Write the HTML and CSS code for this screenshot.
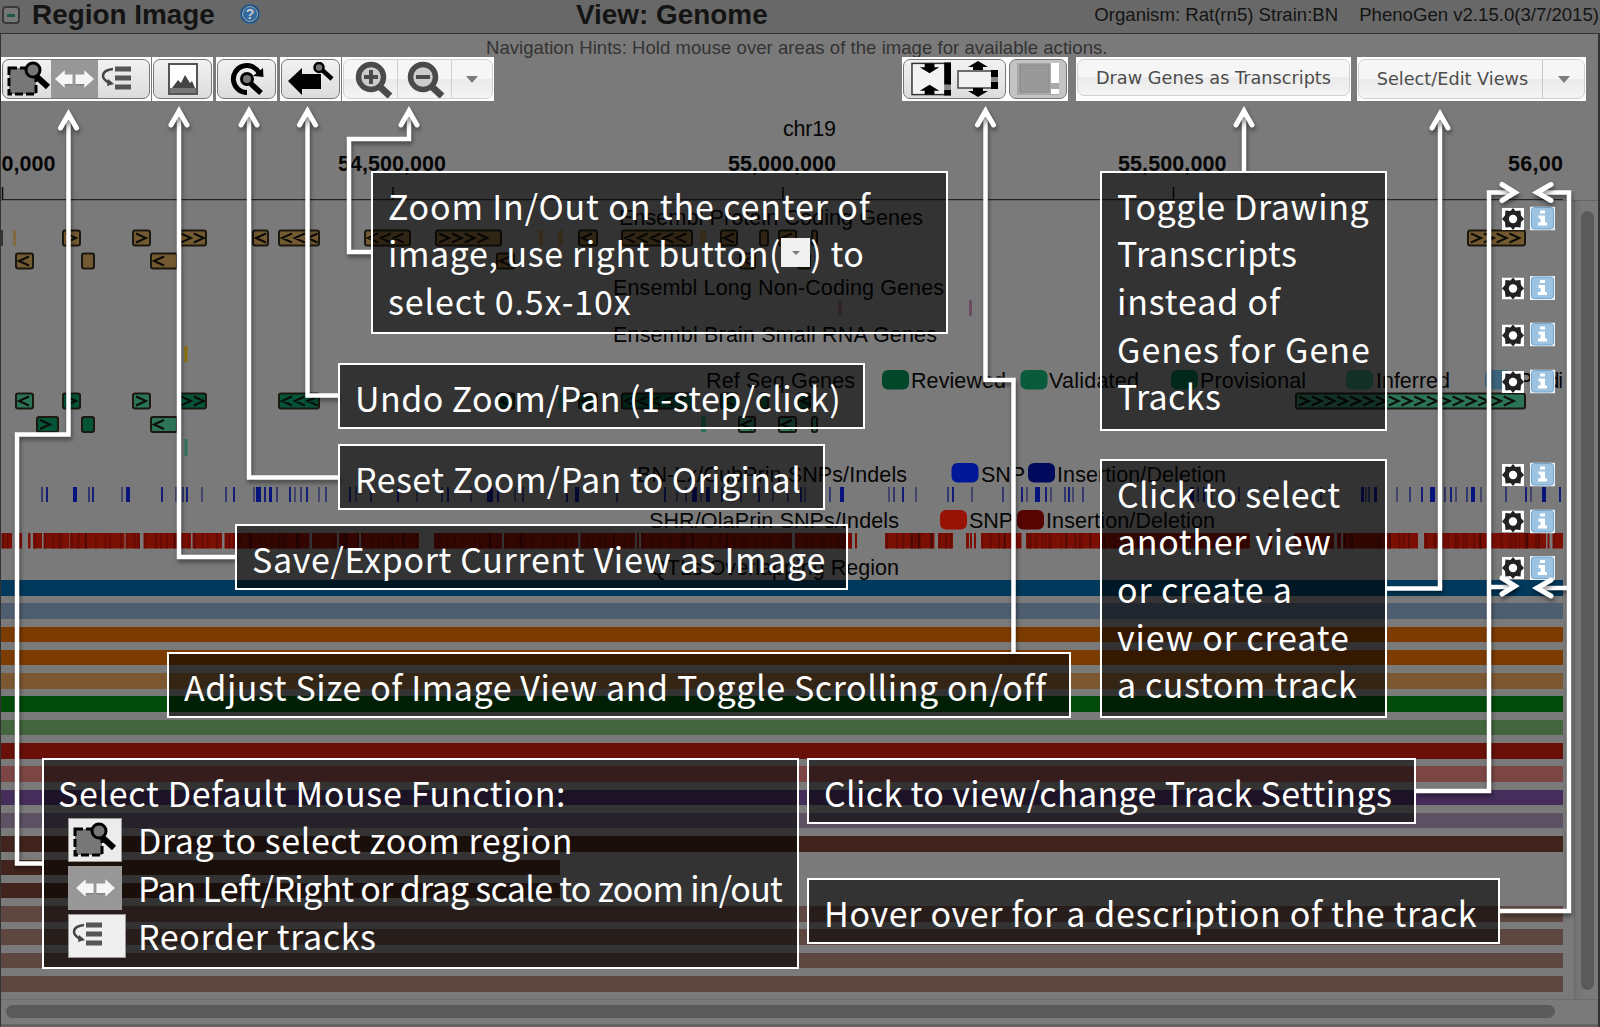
FILE: index.html
```html
<!DOCTYPE html>
<html lang="en">
<head>
<meta charset="utf-8">
<title>PhenoGen Region Image</title>
<link rel="stylesheet" href="styles.css">
</head>
<body>
<svg class="defs" aria-hidden="true">
  <symbol id="i-select" viewBox="0 0 44 36">
    <path d="M2 7H29V33H2Z" fill="#777" stroke="#000" stroke-width="3" stroke-dasharray="8 3"/>
    <path d="M29 15L41 26" stroke="#000" stroke-width="6"/>
    <circle cx="26" cy="9" r="7" fill="#777" stroke="#000" stroke-width="3"/>
  </symbol>
  <symbol id="i-pan" viewBox="0 0 42 20">
    <path d="M1 10L11 1V5.500H19V15H11V19ZM41 10L31 1V5.500H22V15H31V19Z" fill="#f6f6f6"/>
    <path d="M11 16H19M22 16H31" stroke="#777" stroke-width="1"/>
  </symbol>
  <symbol id="i-order" viewBox="0 0 32 24">
    <path d="M14 3H30M14 12H30M14 21H30" stroke="#555" stroke-width="5"/>
    <path d="M12 3Q2 4 2 10Q2 14 9 17" fill="none" stroke="#444" stroke-width="2.500"/>
    <path d="M7 13L13 18L6 20Z" fill="#444"/>
  </symbol>
  <symbol id="i-gear" viewBox="0 0 22 22">
    <rect width="22" height="22" fill="#fff"/>
    <path d="M11 0L13.500 3L18.500 2.500L19 7.500L22 11L19 14L18.500 19.500L13.500 19L11 22L8.500 19L3.500 19.500L3 14L0 11L3 7.500L3.500 2.500L8.500 3Z" fill="#222"/>
    <circle cx="11" cy="11" r="4.200" fill="#fff"/>
  </symbol>
  <symbol id="i-info" viewBox="0 0 25 24">
    <rect width="25" height="24" fill="#e8f1f8"/>
    <rect x="1.500" y="1" width="22" height="21.500" rx="3" fill="#9dc3e2" stroke="#76a5cc"/>
    <path d="M10 4h5v3h-5zM8.500 9H15V16h2v3H8v-3h2.500v-4h-2z" fill="#fff"/>
  </symbol>
</svg>

<div class="page">
  <header class="head">
    <span class="collapse"></span>
    <h1 class="title">Region Image</h1>
    <svg class="help" viewBox="0 0 22 22"><circle cx="11" cy="11" r="10" fill="#1f4f80" stroke="#4a6a88"/><circle cx="11" cy="11" r="7.500" fill="#356a9c" stroke="#9ab" stroke-width="1"/><text x="11" y="16" text-anchor="middle" class="help-q">?</text></svg>
    <h2 class="title view">View: Genome</h2>
    <span class="meta organism">Organism: Rat(rn5) Strain:BN</span>
    <span class="meta">PhenoGen v2.15.0(3/7/2015)</span>
  </header>
  <main class="panel">
    <p class="hint">Navigation Hints: Hold mouse over areas of the image for available actions.</p>
    <div class="tools">
      <div class="well w-mouse"><div class="group">
        <svg class="ic-select"><use href="#i-select"/></svg>
        <span class="on"><svg class="ic-pan"><use href="#i-pan"/></svg></span>
        <svg class="ic-order"><use href="#i-order"/></svg>
      </div></div>
      <div class="well w-save"><div class="group mid">
        <svg width="30" height="32" viewBox="0 0 30 32"><rect x="1" y="1" width="28" height="30" fill="#fff" stroke="#555" stroke-width="2"/><rect x="2" y="25" width="26" height="5" fill="#777"/><path d="M4 25L10 17L13 20L17 12L22 20L24 18L27 25Z" fill="#444"/></svg>
      </div></div>
      <div class="well w-reset"><div class="group mid">
        <svg width="34" height="34" viewBox="0 0 34 34"><path d="M17 30.500A13.500 13.500 0 1 1 29 11" fill="none" stroke="#000" stroke-width="5"/><path d="M23 14L33.500 15L33 6Z"/><path d="M18 19L31 31" stroke="#000" stroke-width="5.500"/><circle cx="17" cy="17" r="5.500" fill="#777" stroke="#000" stroke-width="3"/></svg>
      </div></div>
      <div class="well w-undo"><div class="group mid">
        <svg width="46" height="34" viewBox="0 0 46 34"><path d="M0 19L14 6V12H33V27H14V33Z"/><path d="M32 6L44 17" stroke="#000" stroke-width="4.500"/><circle cx="31" cy="5.500" r="4.500" fill="#777" stroke="#000" stroke-width="2.500"/></svg>
      </div></div>
      <div class="well w-zoom"><div class="group soft">
        <span class="cell c1"><svg width="40" height="40" viewBox="0 0 40 40"><path d="M26 27L37 37" stroke="#4a4a4a" stroke-width="7"/><circle cx="18" cy="18" r="12.500" fill="#ccc" stroke="#4a4a4a" stroke-width="5.500"/><path d="M11 18H25M18 11V25" stroke="#4a4a4a" stroke-width="4"/></svg></span>
        <span class="cell c2"><svg width="40" height="40" viewBox="0 0 40 40"><path d="M26 27L37 37" stroke="#4a4a4a" stroke-width="7"/><circle cx="18" cy="18" r="12.500" fill="#ccc" stroke="#4a4a4a" stroke-width="5.500"/><path d="M11 18H25" stroke="#4a4a4a" stroke-width="4"/></svg></span>
        <span class="cell"><i class="caret"></i></span>
      </div></div>
      <div class="well w-size"><div class="group size">
        <svg width="40" height="34" viewBox="0 0 41 34"><rect x="1" y="1" width="39" height="32" fill="#f2f2f2" stroke="#333" stroke-width="1.500"/><path d="M34 0h7v23h-7zM34 28h7v6h-7z"/><path d="M34 23h7v5h-7z" fill="#888"/><path d="M14 1H24V5H29L19 11L9 5H14ZM14 33H24V29H29L19 23L9 29H14Z"/></svg>
        <svg width="41" height="38" viewBox="0 0 41 38"><rect x="1" y="11" width="39" height="17" fill="#f2f2f2" stroke="#444" stroke-width="1.500"/><path d="M34 10h7v7h-7zM34 22h7v7h-7z"/><path d="M34 17h7v5h-7z" fill="#888"/><path d="M16 10H26V7H31L21 1L11 7H16ZM16 28H26V31H31L21 37L11 31H16Z"/></svg>
      </div><div class="group scroll">
        <svg width="42" height="32" viewBox="0 0 42 32"><rect width="42" height="32" fill="#a8a8a8"/><rect x="3" y="2" width="29" height="27" fill="#999" stroke="#888"/><path d="M34 0h8v20h-8zM34 26h8v5h-8z" fill="#fff"/></svg>
      </div></div>
      <div class="well w-draw"><div class="group soft mid"><span class="btn">Draw Genes as Transcripts</span></div></div>
      <div class="well w-views"><div class="group soft"><span class="cell btn c3">Select/Edit Views</span><span class="cell"><i class="caret"></i></span></div></div>
    </div>
    <svg class="axis" id="axis" width="1563" height="100" viewBox="1 101 1563 100">
      <path d="M2.500 187V200H1563M393 187V200M783 187V200M1173.500 187V200" fill="none" stroke="#0a0a0a" stroke-width="1.500"/>
      <g class="lbl"><text x="783" y="136" textLength="53">chr19</text>
      <g class="pos"><text x="1.500" y="171" textLength="54">0,000</text><text x="338" y="171" textLength="108">54,500,000</text><text x="728" y="171" textLength="108">55,000,000</text><text x="1118" y="171" textLength="108.500">55,500,000</text><text x="1508" y="171" textLength="55">56,00</text></g></g>
    </svg>
    <div class="view-row">
      <div class="tracks">
        <svg id="tracks" width="1574" height="379" viewBox="1 201 1574 379">
          <g id="marks"></g>
          <g class="lbl">
            <text x="619" y="225" textLength="304">Ensembl Protein Coding Genes</text>
            <text x="613" y="295" textLength="331">Ensembl Long Non-Coding Genes</text>
            <text x="613" y="342" textLength="324">Ensembl Brain Small RNA Genes</text>
            <text x="706" y="388" textLength="149">Ref Seq Genes</text>
            <text x="911" y="388" textLength="95">Reviewed</text>
            <text x="1049" y="388" textLength="90">Validated</text>
            <text x="1200" y="388" textLength="106">Provisional</text>
            <text x="1376" y="388" textLength="74">Inferred</text>
            <text x="1518" y="388" textLength="45">Predi</text>
            <text x="637" y="481.500" textLength="270">BN-Lx/CubPrin SNPs/Indels</text>
            <text x="981" y="481.500" textLength="44">SNP</text>
            <text x="1057" y="481.500" textLength="169">Insertion/Deletion</text>
            <text x="649" y="528" textLength="250">SHR/OlaPrin SNPs/Indels</text>
            <text x="969" y="528" textLength="44">SNP</text>
            <text x="1046" y="528" textLength="169">Insertion/Deletion</text>
            <text x="650" y="574.500" textLength="249">QTLs Overlapping Region</text>
          </g>
        </svg>
        <div class="qtls">
          <i class="q navy"></i><i class="q steel"></i><i class="q orange"></i><i class="q orange"></i><i class="q tan"></i><i class="q green"></i><i class="q sage"></i><i class="q red"></i><i class="q rose"></i><i class="q violet"></i><i class="q mauve"></i><i class="q brown"></i><i class="q brown short"></i><i class="q brown short"></i><i class="q clay"></i><i class="q clay"></i><i class="q clay"></i><i class="q clay"></i>
        </div>
      </div>
      <div class="vbar"><i></i></div>
    </div>
    <div class="hbar"><i></i></div>
  </main>

  <svg class="links" width="1600" height="1027" viewBox="0 0 1600 1027">
    <g id="badges"></g>
    <g class="wire">
      <path d="M68.500 114V434.500H17V863.500H42"/>
      <path d="M179 111V557H236"/>
      <path d="M249 111V477.500H339"/>
      <path d="M307.500 111V395.500H339"/>
      <path d="M409 111V139H349V252H372"/>
      <path d="M985.500 111V380H1013.500V652"/>
      <path d="M1244 111V171"/>
      <path d="M1440 114V588.500H1387"/>
      <path d="M1416 791H1489V192.500H1514M1489 587H1514"/>
      <path d="M1500 911H1569V192.500H1539M1569 588H1539"/>
    </g>
    <g class="tips">
      <path d="M60.500 128L68.500 114L76.500 128M171 125L179 111L187 125M241 125L249 111L257 125M299.500 125L307.500 111L315.500 125M401 125L409 111L417 125M977.500 125L985.500 111L993.500 125M1236 125L1244 111L1252 125M1432 128L1440 114L1448 128"/>
      <path d="M1502 184.500L1515 192.500L1502 200.500M1502 578L1515 586L1502 594M1551 184.500L1537 192.500L1551 200.500M1551 580L1537 588L1551 596"/>
    </g>
  </svg>

  <div class="note n-zoom">
    <p class="s4">Zoom In/Out on the center of</p>
    <p>image, use right button(<b class="mini"><i class="caret"></i></b>) to</p>
    <p class="s4">select 0.5x-10x</p>
  </div>
  <div class="note n-undo"><p class="s2">Undo Zoom/Pan (1-step/click)</p></div>
  <div class="note n-reset"><p class="s2">Reset Zoom/Pan to Original</p></div>
  <div class="note n-save"><p class="s3">Save/Export Current View as Image</p></div>
  <div class="note n-adjust"><p>Adjust Size of Image View and Toggle Scrolling on/off</p></div>
  <div class="note n-mouse">
    <p class="s3">Select Default Mouse Function:</p>
    <p><b class="chip"><svg class="ic-select"><use href="#i-select"/></svg></b>Drag to select zoom region</p>
    <p class="tight"><b class="chip dark"><svg class="ic-pan"><use href="#i-pan"/></svg></b>Pan Left/Right or drag scale to zoom in/out</p>
    <p><b class="chip wide"><svg class="ic-order"><use href="#i-order"/></svg></b>Reorder tracks</p>
  </div>
  <div class="note n-settings"><p class="s1">Click to view/change Track Settings</p></div>
  <div class="note n-hover"><p class="s3">Hover over for a description of the track</p></div>
  <div class="note n-toggle">
    <p>Toggle Drawing</p><p class="s2">Transcripts</p><p class="s4">instead of</p><p class="s5">Genes for Gene</p><p class="s1">Tracks</p>
  </div>
  <div class="note n-views">
    <p class="s1">Click to select</p><p class="s3">another view</p><p class="s4">or create a</p><p class="s4">view or create</p><p>a custom track</p>
  </div>
</div>
<script src="tracks.js"></script>
</body>
</html>
```

FILE: styles.css
```css
* { box-sizing: border-box; }
body { margin: 0; background: #7b7a7a; font-family: "Liberation Sans", Arial, sans-serif; }
p, h1, h2 { margin: 0; }
.defs { position: absolute; width: 0; height: 0; }
.page { position: relative; width: 1600px; height: 1027px; overflow: hidden; }

/* header */
.head { display: flex; align-items: center; height: 33px; padding: 0 1px 3px 2px; background: #686868; color: #141414; white-space: nowrap; }
.collapse { position: relative; width: 18px; height: 18px; margin-right: 12px; border: 2px solid #3a3a3a; border-radius: 4px; background: #777; }
.collapse::after { content: ""; position: absolute; left: 3px; top: 6px; width: 8px; height: 3px; background: #1f5a48; }
.title { font-size: 27.9px; line-height: 30px; width: 182px; }
.help { width: 22px; height: 22px; margin: -2px 0 0 25px; }
.help-q { font: bold 14px "Liberation Sans", sans-serif; fill: #c4ccd4; }
.view { width: 192px; margin-left: 315px; }
.meta { font-size: 18.600px; }
.organism { margin: 0 21px 0 auto; }

/* panel and toolbar */
.panel { display: flex; flex-direction: column; height: 994px; border: 1px solid #333; border-width: 1px 2px 0 1px; background: #7b7a7a; }
.hint { height: 23px; padding-left: 485px; font-size: 18.500px; line-height: 27px; letter-spacing: .06px; color: #333; white-space: nowrap; }
.tools { display: flex; height: 44px; }
.well { display: flex; gap: 3px; padding: 2px 1px; background: #fff; }
.group { display: flex; align-items: center; flex: 1; border: 1.500px solid #777; border-radius: 7px; background: linear-gradient(#f2f2f2, #dcdcdc); overflow: hidden; }
.mid { justify-content: center; }
.soft { border-color: #d0d0d0; background: linear-gradient(#f6f6f6 50%, #ebebeb 50%, #f4f4f4); }
.w-mouse { width: 150px; }
.w-save { width: 61px; margin-left: 1px; }
.w-reset { width: 61px; margin-left: 3px; }
.w-undo { width: 61px; margin-left: 3px; }
.w-zoom { width: 152px; margin-left: 1px; }
.w-size { width: 166px; margin-left: 408px; }
.w-draw { width: 275px; margin-left: 8px; }
.w-draw .group { margin-bottom: 3px; }
.w-views { width: 229px; margin-left: 6px; }
.ic-select { width: 44px; height: 36px; margin-left: 4px; flex: none; }
.on { display: flex; align-items: center; justify-content: center; width: 47px; height: 42px; background: #979797; flex: none; }
.ic-pan { width: 41px; height: 20px; flex: none; }
.ic-order { width: 32px; height: 24px; margin-left: 3px; margin-top: -3px; flex: none; }
.cell { display: flex; align-items: center; justify-content: center; height: 100%; flex: 1; }
.c1, .c2 { flex: 0 0 54px; border-right: 1px solid #d0d0d0; }
.c1 { padding-left: 4px; }
.c3 { flex: 0 0 184px; padding-left: 4px; border-right: 1px solid #c8c8c8; }
.caret { width: 0; height: 0; border: 6px solid transparent; border-top: 7px solid #7c7c7c; border-bottom: 0; }
.btn { font: 17.700px "DejaVu Sans", sans-serif; color: #4c4c4c; white-space: nowrap; }
.size { flex: 0 0 103px; justify-content: space-evenly; }
.scroll { background: #c4c4c4; justify-content: center; }

/* genome image */
.axis { display: block; flex: none; }
.lbl { font: 21.500px "Liberation Sans", sans-serif; fill: #060606; }
.pos { font-weight: bold; }
.view-row { display: flex; height: 799px; border-top: 1px solid #666; margin-top: -1px; flex: none; }
.tracks { width: 1574px; border-right: 1px solid #6a6a6a; }
.tracks svg { display: block; }
.qtls { display: flex; flex-direction: column; gap: 7.800px; width: 1562px; }
.q { height: 15.500px; flex: none; }
.short { width: 559px; }
.navy { background: #00395b; }
.steel { background: #4e5d70; }
.orange { background: #7c3b00; }
.tan { background: #7c5832; }
.green { background: #024a0a; }
.sage { background: #44663f; }
.red { background: #691009; }
.rose { background: #7c4644; }
.violet { background: #452e5b; }
.mauve { background: #5d5264; }
.brown { background: #41241d; }
.clay { background: #5d4740; }
.vbar { flex: 1; padding: 10px 0 0 6px; background: linear-gradient(90deg, #727272, #7a7a7a 40%, #7a7a7a); }
.vbar i { display: block; width: 13px; height: 779px; border-radius: 7px; background: #5a5a5a; }
.hbar { flex: 1; padding: 5px 0 0 5px; border-top: 1px solid #6c6c6c; border-bottom: 3px solid #646464; }
.hbar i { display: block; width: 1549px; height: 13px; border-radius: 7px; background: #5a5a5a; }

/* connectors */
.links { position: absolute; left: 0; top: 0; }
.wire, .tips { fill: none; stroke: #fff; stroke-width: 4.500; filter: drop-shadow(1px 3px 2px rgba(0, 0, 0, .45)); }
.tips { stroke-width: 5; stroke-linecap: round; }

/* callouts */
.note { position: absolute; padding: 8.500px 0 0 15px; border: 2px solid #fff; background: rgba(0, 0, 0, .58); color: #fff; font: 34px/47.700px "Noto Sans CJK SC", sans-serif; letter-spacing: .58px; white-space: nowrap; }
.note p { display: flex; }
.note .s1 { letter-spacing: .36px; }
.note .s2 { letter-spacing: .46px; }
.note .s3 { letter-spacing: .67px; }
.note .s4 { letter-spacing: .86px; }
.note .s5 { letter-spacing: 1.050px; }
.note .tight { letter-spacing: -.71px; }
.n-zoom { left: 371px; top: 171px; width: 577px; height: 163px; }
.n-undo { left: 338px; top: 363px; width: 527px; height: 66px; }
.n-reset { left: 338px; top: 444px; width: 487px; height: 66px; }
.n-save { left: 235px; top: 524px; width: 613px; height: 66px; }
.n-adjust { left: 167px; top: 652px; width: 904px; height: 66px; }
.n-mouse { left: 42px; top: 758px; width: 757px; height: 211px; padding-left: 14px; }
.n-settings { left: 807px; top: 758px; width: 609px; height: 66px; }
.n-hover { left: 807px; top: 878px; width: 693px; height: 66px; }
.n-toggle { left: 1100px; top: 171px; width: 287px; height: 260px; }
.n-views { left: 1100px; top: 459px; width: 287px; height: 259px; }
.mini { display: flex; align-items: center; justify-content: center; width: 29px; height: 29px; margin-top: 9px; background: #f0f0f0; }
.mini .caret { border-width: 4px 4px 0; }
.chip { display: flex; align-items: center; width: 54px; height: 44px; margin: 2px 16px 0 10px; background: #ececec; border: 1px solid #999; flex: none; }
.dark { background: #979797; justify-content: center; }
.wide { width: 58px; margin-right: 12px; background: #efefef; }
```

FILE: tracks.js
```js
// Draws genes, variants, legend swatches and per-track buttons.
const NS = 'http://www.w3.org/2000/svg';
const marks = document.getElementById('marks');
const badges = document.getElementById('badges');

function add(parent, tag, attrs) {
  const el = document.createElementNS(NS, tag);
  for (const k in attrs) el.setAttribute(k, attrs[k]);
  parent.appendChild(el);
}
function rect(x, y, w, h, fill, extra) {
  add(marks, 'rect', Object.assign({ x, y, width: w, height: h, fill }, extra));
}
// count > 0 points right, count < 0 points left
function gene(x1, x2, y, fill, count) {
  rect(x1 + 1, y + 1, x2 - x1 - 2, 15, fill, { rx: 2, stroke: '#1c1810', 'stroke-width': 2 });
  let d = '';
  for (let i = 0; i < Math.abs(count); i++) {
    const x = x1 + 4 + i * 12.8;
    d += count > 0 ? `M${x} ${y + 4}L${x + 10} ${y + 8.5}L${x} ${y + 13}`
      : `M${x + 10} ${y + 4}L${x} ${y + 8.5}L${x + 10} ${y + 13}`;
  }
  if (d) add(marks, 'path', { d, fill: 'none', stroke: '#0c0c08', 'stroke-width': 2 });
}
const TAN = '#745a30', DARK = '#04543a', LIGHT = '#2c7458';

[[62, 81, 1], [132, 151, 1], [177, 207, 2], [252, 269, -1], [278, 320, -3], [364, 411, -3],
 [435, 502, 4], [578, 598, -1], [621, 693, -5], [720, 738, -1], [759, 769, 0], [778, 797, -1],
 [811, 818, 0], [1467, 1526, 4]].forEach(g => gene(g[0], g[1], 229.5, TAN, g[2]));
[[15, 34, -1], [81, 95, 0], [150, 178, -1], [496, 515, -1], [739, 756, -1], [797, 811, 0]]
  .forEach(g => gene(g[0], g[1], 252.5, TAN, g[2]));
[[13, 3], [539, 4], [558, 5], [700, 6]].forEach(t => rect(t[0], 230, t[1], 16, '#806840'));
rect(1, 230, 2, 16, '#333');

[[15, 34, -1, LIGHT], [62, 81, 1, DARK], [132, 151, 1, LIGHT], [177, 207, 2, DARK],
 [278, 320, -3, DARK], [496, 515, -1, DARK], [578, 598, -1, DARK], [621, 693, -5, DARK],
 [720, 738, -1, DARK], [759, 769, 0, DARK], [797, 811, -1, DARK], [1295, 1526, 17, LIGHT]]
  .forEach(g => gene(g[0], g[1], 392.5, g[3], g[2]));
[[36, 59, 1, DARK], [81, 95, 0, DARK], [150, 178, -1, LIGHT], [738, 756, -1, LIGHT],
 [778, 797, -1, LIGHT], [811, 818, 0, LIGHT]].forEach(g => gene(g[0], g[1], 416, g[3], g[2]));
rect(558, 393, 5, 16, LIGHT);
rect(701, 416, 5, 16, LIGHT);
rect(184.500, 439, 3, 17, LIGHT);
rect(184.500, 346, 3, 16, '#8a7000');
[838.5, 969, 1124.5].forEach(x => rect(x, 300, 3, 16, '#6c4c62'));

[[882, 370, '#03472a'], [1020.500, 370, '#0a5a3c'], [1171, 370, '#076040'], [1346, 370, '#2c7458'],
 [1485, 370, '#3d667c'], [951.500, 463, '#001898'], [1028, 463, '#000a5c'],
 [940, 510, '#981205'], [1017, 510, '#560402']].forEach(s => rect(s[0], s[1], 27, 19.500, s[2], { rx: 6 }));

// single nucleotide variants: [x, width]
const w1 = x => [x, 2];
const blue = [41, 46, [73, 4], 88, 92, 121, [126, 4], 161, 175, 182, 186, 201, 225, 233, 253, [256, 5], 264,
  [269, 3], 276, 289, 294, 300, 306, 318, 325, 349, 355, 370, 397, 416, 441, 447, 470, [487, 6], 497, 514, 522,
  566, [575, 4], 616, 664, 676, 685, [692, 5], 700, [706, 4], 721, 732, 740, 758, 772, 787, 800, 804, 829,
  [840, 4], 888, 893, 902, 915, 947, 952, 971, 1002, 1021, 1026, [1035, 5], 1045, 1050, 1064, 1068, 1072, 1082,
  1163, [1190, 4], 1197, 1203, 1211, 1238, 1269, 1300, 1320, [1361, 3], 1365, 1368, [1374, 3], 1396, 1409, 1421,
  [1430, 5], 1444, 1450, 1455, 1466, [1471, 4], 1480, 1505, 1525, 1530, [1542, 4], 1559];
blue.map(b => Array.isArray(b) ? b : w1(b)).forEach((b, i) =>
  rect(b[0], 487, b[1], 15, b[1] > 2 ? '#08147e' : ['#34386e', '#141e74', '#44466c'][i % 3]));

// dense variants drawn as spans with denser columns inside
let seed = 7;
const rnd = () => (seed = (seed * 16807) % 2147483647) / 2147483647;
[[1.5, 12], [19, 22], [28, 30.500], [33, 42], [43.500, 69], [69.500, 124.500], [125.500, 140], [143.500, 191],
 [192.500, 222], [224.500, 309.500], [312, 337], [339, 359], [361, 419], [434, 502], [504, 578], [580.500, 635],
 [637, 639], [641, 792], [795, 852], [855, 857], [885, 934.500], [938, 953], [966, 969], [970, 972], [974, 976],
 [981, 1021.500], [1026, 1250], [1268, 1272], [1294, 1334], [1337, 1341], [1343, 1418], [1424, 1546],
 [1547.500, 1549.500], [1552.500, 1563]].forEach(([a, b]) => {
  rect(a, 533, b - a, 15.500, '#7c0f04');
  for (let x = a + 1; x < b - 2; x += 2 + rnd() * 9) rect(x, 533, 1 + rnd() * 1.5, 15.500, rnd() < 0.85 ? '#640c04' : '#480805');
});

[[208, 206.500], [277.500, 276], [324.500, 322.500], [371, 369.500], [464, 462.500], [510.500, 509.500], [557, 556]].forEach(([g, i]) => {
  add(badges, 'use', { href: '#i-gear', x: 1502, y: g, width: 22, height: 22 });
  add(badges, 'use', { href: '#i-info', x: 1530, y: i, width: 25, height: 24 });
});
```
